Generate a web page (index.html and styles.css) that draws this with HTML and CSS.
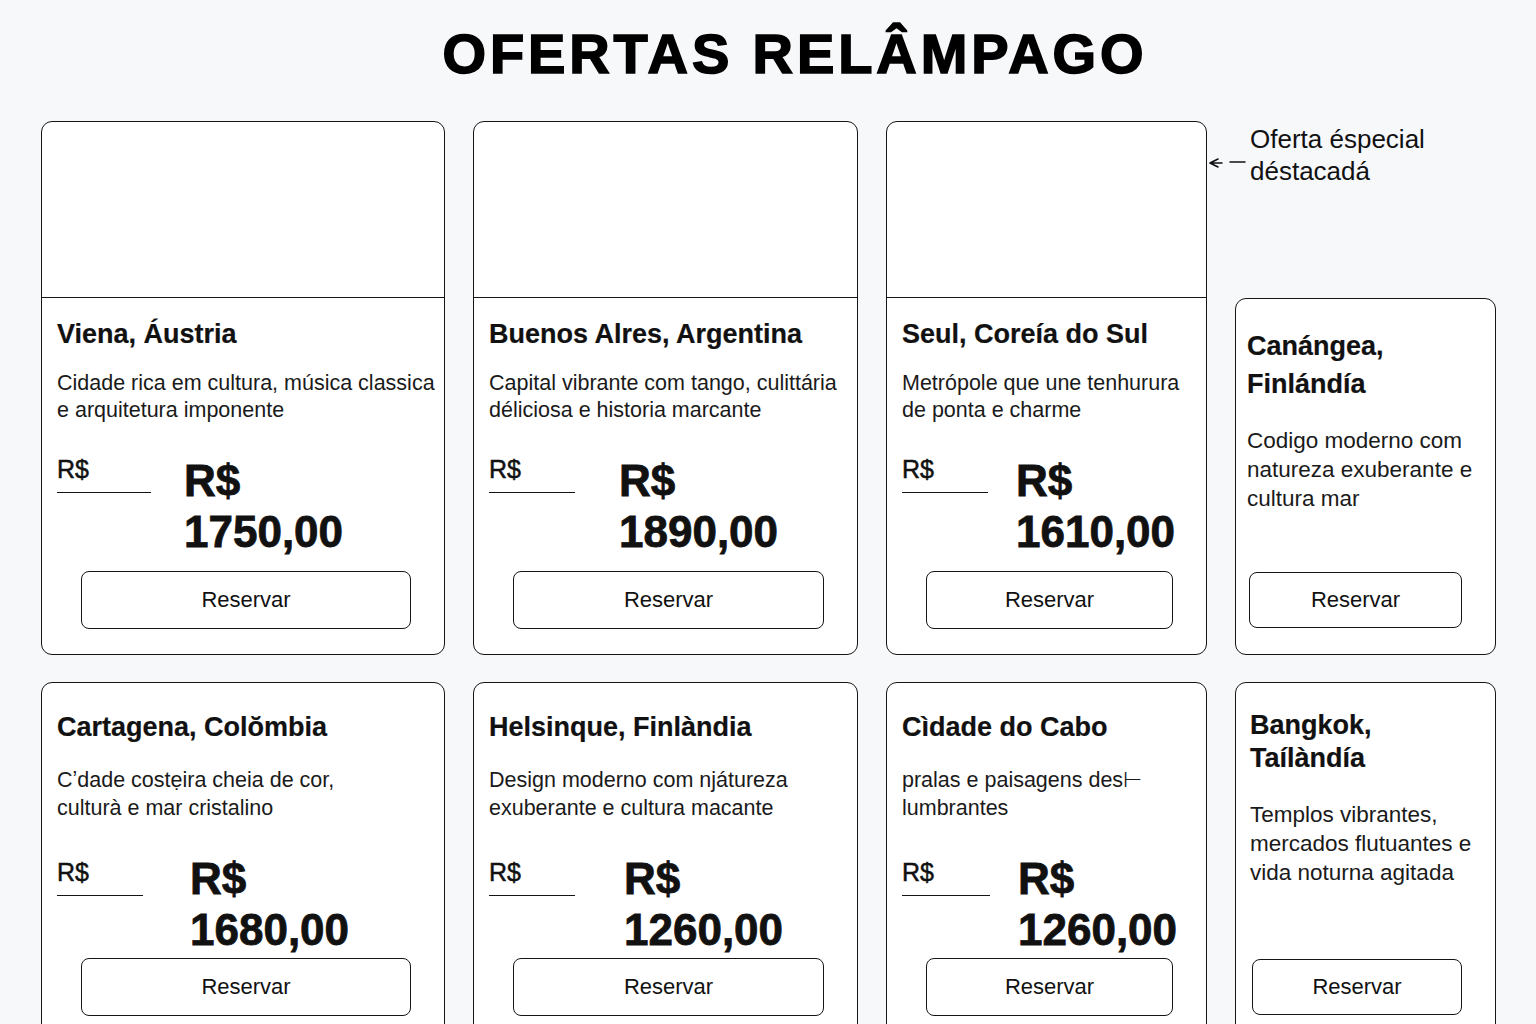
FILE: index.html
```html
<!DOCTYPE html>
<html lang="pt-BR">
<head>
<meta charset="utf-8">
<title>Ofertas Relâmpago</title>
<link rel="stylesheet" href="styles.css">
</head>
<body>
<header class="header">
  <h1 class="title">OFERTAS RELÂMPAGO</h1>
</header>
<main class="grid">
  <article class="card">
    <div class="card-image"></div>
    <div class="card-body">
      <h2 class="card-title">Viena, Áustria</h2>
      <p class="card-desc">Cidade rica em cultura, música classica<br>e arquitetura imponente</p>
      <div class="price">
        <span class="old-price w94">R$</span>
        <div class="new-price off143"><span>R$</span><span>1750,00</span></div>
      </div>
      <button class="btn">Reservar</button>
    </div>
  </article>

  <article class="card">
    <div class="card-image"></div>
    <div class="card-body">
      <h2 class="card-title">Buenos Alres, Argentina</h2>
      <p class="card-desc">Capital vibrante com tango, culittária<br>déliciosa e historia marcante</p>
      <div class="price">
        <span class="old-price w86">R$</span>
        <div class="new-price off146"><span>R$</span><span>1890,00</span></div>
      </div>
      <button class="btn">Reservar</button>
    </div>
  </article>

  <article class="card">
    <div class="card-image"></div>
    <div class="card-body">
      <h2 class="card-title">Seul, Coreía do Sul</h2>
      <p class="card-desc">Metrópole que une tenhurura<br>de ponta e charme</p>
      <div class="price">
        <span class="old-price w86">R$</span>
        <div class="new-price off131"><span>R$</span><span>1610,00</span></div>
      </div>
      <button class="btn">Reservar</button>
    </div>
  </article>

  <div class="featured-col">
    <div class="note">
      <svg class="note-arrow" width="40" height="14" viewBox="0 0 40 14" aria-hidden="true">
        <path d="M2 7 L10 3 M2 7 L10 11 M2 7 L14 7" fill="none" stroke="#111" stroke-width="1.6" stroke-linecap="round"/>
        <path d="M22 6 L37 6" fill="none" stroke="#111" stroke-width="1.5" stroke-linecap="round"/>
      </svg>
      <p class="note-text">Oferta éspecial<br>déstacadá</p>
    </div>
    <article class="card card-narrow">
      <div class="card-body body-narrow-a">
        <h2 class="card-title title-narrow-a">Canángea,<br>Finlándía</h2>
        <p class="card-desc desc-narrow desc-narrow-a">Codigo moderno com<br>natureza exuberante e<br>cultura mar</p>
        <button class="btn btn-narrow">Reservar</button>
      </div>
    </article>
  </div>

  <article class="card">
    <div class="card-body body-plain">
      <h2 class="card-title">Cartagena, Colŏmbia</h2>
      <p class="card-desc desc-plain">C&#700;dade costẹira cheia de cor,<br>culturà e mar cristalino</p>
      <div class="price">
        <span class="old-price w86 drop">R$</span>
        <div class="new-price off150"><span>R$</span><span>1680,00</span></div>
      </div>
      <button class="btn">Reservar</button>
    </div>
  </article>

  <article class="card">
    <div class="card-body body-plain">
      <h2 class="card-title">Helsinque, Finlàndia</h2>
      <p class="card-desc desc-plain">Design moderno com njátureza<br>exuberante e cultura macante</p>
      <div class="price">
        <span class="old-price w86 drop">R$</span>
        <div class="new-price off151"><span>R$</span><span>1260,00</span></div>
      </div>
      <button class="btn">Reservar</button>
    </div>
  </article>

  <article class="card">
    <div class="card-body body-plain">
      <h2 class="card-title">Cìdade do Cabo</h2>
      <p class="card-desc desc-plain">pralas e paisagens des&#8866;<br>lumbrantes</p>
      <div class="price">
        <span class="old-price w88 drop">R$</span>
        <div class="new-price off131"><span>R$</span><span>1260,00</span></div>
      </div>
      <button class="btn">Reservar</button>
    </div>
  </article>

  <article class="card card-narrow">
    <div class="card-body body-narrow-b">
      <h2 class="card-title title-narrow-b">Bangkok,<br>Taílàndía</h2>
      <p class="card-desc desc-narrow desc-narrow-b">Templos vibrantes,<br>mercados flutuantes e<br>vida noturna agitada</p>
      <button class="btn btn-narrow">Reservar</button>
    </div>
  </article>
</main>
</body>
</html>
```
FILE: styles.css
```css
* {
  box-sizing: border-box;
}

html,
body {
  margin: 0;
  padding: 0;
}

body {
  height: 1024px;
  overflow: hidden;
  background: #f7f8fa;
  font-family: "Liberation Sans", Arial, sans-serif;
  color: #111;
}

.header {
  height: 121px;
  padding-top: 22px;
  text-align: center;
}

.title {
  margin: 0;
  font-size: 56px;
  line-height: 64px;
  font-weight: 700;
  letter-spacing: 3.9px;
  color: #000;
  -webkit-text-stroke: 1.6px #000;
  padding-left: 54px;
}

.grid {
  display: grid;
  grid-template-columns: 404px 385px 321px 261px;
  grid-template-rows: 534px 360px;
  column-gap: 28px;
  row-gap: 27px;
  padding-left: 41px;
}

.card {
  background: #fff;
  border: 1.5px solid #151515;
  border-radius: 11px;
  display: flex;
  flex-direction: column;
  overflow: hidden;
}

.card-image {
  flex: none;
  height: 176px;
  border-bottom: 1.5px solid #151515;
}

.card-body {
  flex: 1;
  display: flex;
  flex-direction: column;
  padding: 20px 0 25px 15px;
}

.body-plain {
  padding-top: 28px;
}

.card-title {
  margin: 0;
  font-size: 27px;
  line-height: 32px;
  font-weight: 700;
  color: #111;
  white-space: nowrap;
  -webkit-text-stroke: 0.2px #111;
}

.card-desc {
  margin: 20px 0 0;
  font-size: 21.5px;
  line-height: 27px;
  color: #1a1a1a;
  white-space: nowrap;
}

.desc-plain {
  margin-top: 24px;
  line-height: 27.5px;
}

.price {
  display: flex;
  align-items: flex-start;
  margin-top: 31px;
}

.old-price {
  flex: none;
  font-size: 25px;
  line-height: 28px;
  padding-bottom: 8.5px;
  border-bottom: 1.5px solid #151515;
  color: #111;
  -webkit-text-stroke: 0.5px #111;
}

.old-price.drop {
  margin-top: 5px;
}

.w94 { width: 94px; }
.w86 { width: 86px; }
.w88 { width: 88px; }

.new-price {
  display: flex;
  flex-direction: column;
  font-size: 44px;
  line-height: 51px;
  font-weight: 700;
  color: #111;
  -webkit-text-stroke: 0.8px #111;
}

.off143 { margin-left: 33px; }
.off146 { margin-left: 44px; }
.off131 { margin-left: 28px; }
.off150 { margin-left: 47px; }
.off151 { margin-left: 49px; }

.btn {
  margin: auto 33px 0 24px;
  height: 58px;
  background: #fff;
  border: 1.5px solid #151515;
  border-radius: 8px;
  font-family: "Liberation Sans", Arial, sans-serif;
  font-size: 22px;
  color: #111;
  padding: 0;
  cursor: pointer;
}

/* featured narrow column */
.featured-col {
  display: flex;
  flex-direction: column;
}

.note {
  position: relative;
  flex: none;
  height: 177px;
  padding: 2px 0 0 15px;
}

.note-text {
  margin: 0;
  font-size: 26px;
  line-height: 32px;
  color: #111;
}

.note-text::first-line {
  letter-spacing: 0;
}

.note-arrow {
  position: absolute;
  left: -27px;
  top: 35px;
}

.card-narrow {
  flex: 1;
}

.body-narrow-a {
  padding: 28px 0 26px 11px;
}

.body-narrow-b {
  padding: 26px 0 26px 14px;
}

.title-narrow-a {
  line-height: 38px;
}

.title-narrow-b {
  line-height: 33px;
}

.desc-narrow {
  font-size: 22.5px;
  line-height: 29px;
}

.desc-narrow-a {
  margin-top: 23px;
}

.desc-narrow-b {
  margin-top: 25px;
}

.btn-narrow {
  height: 56px;
  margin-left: 2px;
  margin-right: 33px;
}
```
